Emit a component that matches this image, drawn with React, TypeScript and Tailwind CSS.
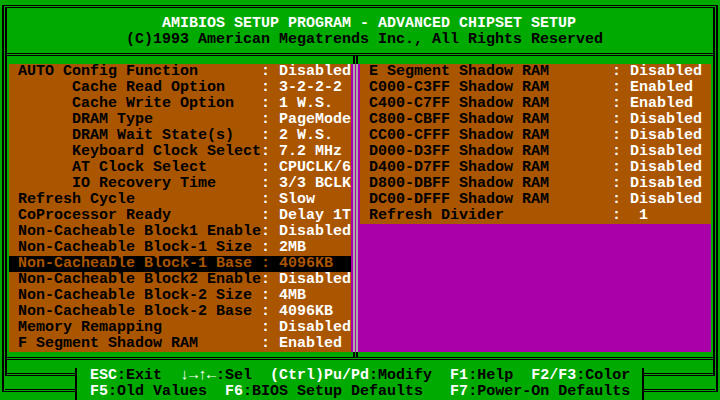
import React from 'react';

const leftItems: [string, string][] = [
  ['AUTO Config Function', 'Disabled'],
  ['      Cache Read Option', '3-2-2-2'],
  ['      Cache Write Option', '1 W.S.'],
  ['      DRAM Type', 'PageMode'],
  ['      DRAM Wait State(s)', '2 W.S.'],
  ['      Keyboard Clock Select', '7.2 MHz'],
  ['      AT Clock Select', 'CPUCLK/6'],
  ['      IO Recovery Time', '3/3 BCLK'],
  ['Refresh Cycle', 'Slow'],
  ['CoProcessor Ready', 'Delay 1T'],
  ['Non-Cacheable Block1 Enable', 'Disabled'],
  ['Non-Cacheable Block-1 Size', '2MB'],
  ['Non-Cacheable Block-1 Base', '4096KB'],
  ['Non-Cacheable Block2 Enable', 'Disabled'],
  ['Non-Cacheable Block-2 Size', '4MB'],
  ['Non-Cacheable Block-2 Base', '4096KB'],
  ['Memory Remapping', 'Disabled'],
  ['F Segment Shadow RAM', 'Enabled'],
];

const rightItems: [string, string][] = [
  ['E Segment Shadow RAM', 'Disabled'],
  ['C000-C3FF Shadow RAM', 'Enabled'],
  ['C400-C7FF Shadow RAM', 'Enabled'],
  ['C800-CBFF Shadow RAM', 'Disabled'],
  ['CC00-CFFF Shadow RAM', 'Disabled'],
  ['D000-D3FF Shadow RAM', 'Disabled'],
  ['D400-D7FF Shadow RAM', 'Disabled'],
  ['D800-DBFF Shadow RAM', 'Disabled'],
  ['DC00-DFFF Shadow RAM', 'Disabled'],
  ['Refresh Divider', ' 1'],
];

// [text, isKey] - keys are white, descriptions black
const helpRow1: [string, boolean][] = [
  ['ESC', true], [':Exit  ', false],
  ['↓→↑←', true], [':Sel  ', false],
  ['(Ctrl)Pu/Pd', true], [':Modify  ', false],
  ['F1', true], [':Help  ', false],
  ['F2/F3', true], [':Color', false],
];

const helpRow2: [string, boolean][] = [
  ['F5', true], [':Old Values  ', false],
  ['F6', true], [':BIOS Setup Defaults   ', false],
  ['F7', true], [':Power-On Defaults', false],
];

const SetupRow = ({ label, value, selected }: { label: string; value: string; selected?: boolean }) => (
  <div
    className={
      selected
        ? 'h-4 pl-[9px] whitespace-pre bg-black text-[#AA5500]'
        : 'h-4 pl-[9px] whitespace-pre bg-[#AA5500] text-black'
    }
  >
    <span>{label.padEnd(27)}</span>
    <span className={selected ? '' : 'text-white'}>{': ' + value}</span>
  </div>
);

const HelpLine = ({ parts }: { parts: [string, boolean][] }) => (
  <div className="h-4 pl-[9px] whitespace-pre">
    {parts.map(([t, key], i) => (
      <span key={i} className={key ? 'text-white' : 'text-black'}>
        {t}
      </span>
    ))}
  </div>
);

export default function App() {
  return (
    <div className="w-[720px] h-[400px] bg-[#00AA00] flex flex-col overflow-hidden font-['Liberation_Mono',monospace] text-[15px] leading-4 font-bold">
      {/* main frame, rows 0-21 */}
      <div className="h-[352px] pt-[5px] px-[2px]">
        <div className="h-full border-t border-x-2 border-black pt-px px-px">
          <div className="h-full border-t border-x-2 border-black px-[2px] pt-[8px] flex flex-col">
            <div className="h-4 pl-[153px] whitespace-pre text-white">
              AMIBIOS SETUP PROGRAM - ADVANCED CHIPSET SETUP
            </div>
            <div className="h-4 pl-[117px] whitespace-pre text-black">
              (C)1993 American Megatrends Inc., All Rights Reserved
            </div>

            {/* ╠═══╦═══╣ */}
            <div className="-mx-[2px] h-4 pt-[5px]">
              <div className="border-t border-black pt-px">
                <div className="border-t border-black pl-[346px]">
                  <div className="w-[5px] h-[8px] border-x-2 border-black" />
                </div>
              </div>
            </div>

            <div className="h-[288px] flex">
              <div className="w-[342px] flex flex-col">
                {leftItems.map(([l, v], i) => (
                  <SetupRow key={i} label={l} value={v} selected={i === 12} />
                ))}
              </div>
              <div className="w-[9px] bg-[#AA00AA] pl-[2px]">
                <div className="w-[5px] h-full border-x-2 border-[#AAAAAA]" />
              </div>
              <div className="w-[351px] flex flex-col bg-[#AA00AA]">
                {rightItems.map(([l, v], i) => (
                  <SetupRow key={i} label={l} value={v} />
                ))}
              </div>
            </div>
          </div>
        </div>
      </div>

      {/* row 22: ╠═══╩═══╣ */}
      <div className="h-4 px-[2px]">
        <div className="h-full border-x-2 border-black px-px">
          <div className="h-full border-x-2 border-black">
            <div className="h-[5px] pl-[346px]">
              <div className="w-[5px] h-full border-x-2 border-black" />
            </div>
            <div className="border-t border-black pt-px">
              <div className="border-t border-black" />
            </div>
          </div>
        </div>
      </div>

      {/* rows 23-24: help bar */}
      <div className="h-8 flex">
        <div className="w-[81px] flex flex-col">
          <div className="h-4 flex">
            <div className="w-[2px]" />
            <div className="w-[2px] bg-black" />
            <div className="w-px" />
            <div className="w-[70px] h-[8px] border-l-2 border-b border-black">
              <div className="mt-[5px] border-t border-black" />
            </div>
            <div className="w-[2px] bg-black" />
          </div>
          <div className="h-4 flex">
            <div className="w-[2px]" />
            <div className="w-[73px] h-[8px] border-l-2 border-b border-black pl-px">
              <div className="mt-[5px] border-t border-black" />
            </div>
            <div className="w-[2px] bg-black" />
          </div>
        </div>

        <div className="w-[558px] flex flex-col">
          <HelpLine parts={helpRow1} />
          <HelpLine parts={helpRow2} />
        </div>

        <div className="w-[81px] flex flex-col">
          <div className="h-4 flex">
            <div className="w-[3px]" />
            <div className="w-[2px] bg-black" />
            <div className="w-[71px] h-[8px] border-r-2 border-b border-black">
              <div className="mt-[5px] border-t border-black" />
            </div>
            <div className="w-px" />
            <div className="w-[2px] bg-black" />
          </div>
          <div className="h-4 flex">
            <div className="w-[3px]" />
            <div className="w-[2px] bg-black" />
            <div className="w-[74px] h-[8px] border-r-2 border-b border-black pr-px">
              <div className="mt-[5px] border-t border-black" />
            </div>
          </div>
        </div>
      </div>
    </div>
  );
}
